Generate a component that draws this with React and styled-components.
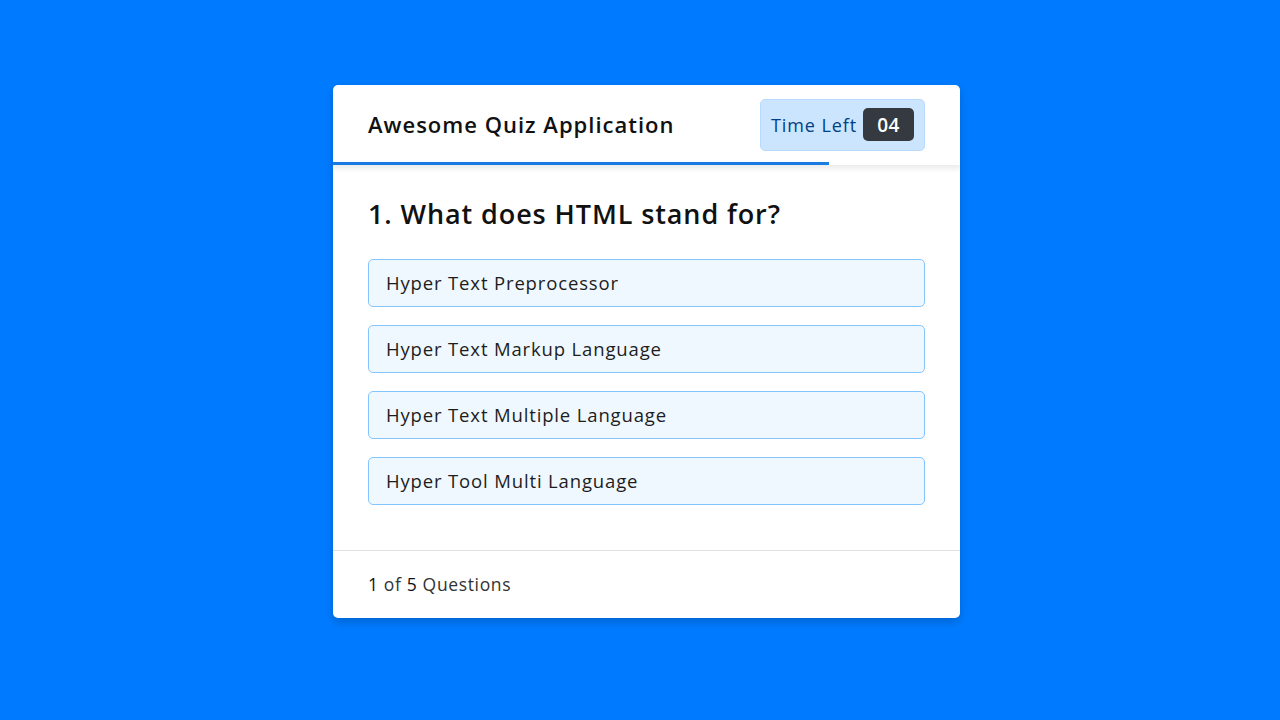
import styled, { createGlobalStyle } from 'styled-components';

const GlobalStyle = createGlobalStyle`
  * { box-sizing: border-box; margin: 0; padding: 0; }
  body {
    background: #007bff;
    font-family: "Open Sans", "Noto Sans", sans-serif;
  }
`

const options = [
  'Hyper Text Preprocessor',
  'Hyper Text Markup Language',
  'Hyper Text Multiple Language',
  'Hyper Tool Multi Language',
]

const App = () => {
  const progress = 496 / 627

  return (
    <>
      <GlobalStyle />
      <Page>
        <QuizBox>
          <Header>
            <HeaderRow>
              <Title>Awesome Quiz Application</Title>
              <Timer>
                <TimeText>Time Left</TimeText>
                <TimeSec>04</TimeSec>
              </Timer>
            </HeaderRow>
            <Track>
              <TimeLine style={{ width: `${progress * 100}%` }} />
            </Track>
          </Header>
          <Section>
            <Question>1. What does HTML stand for?</Question>
            <OptionList>
              {options.map(opt => (
                <Option key={opt}>{opt}</Option>
              ))}
            </OptionList>
          </Section>
          <Footer>
            <Count><b>1</b> of <b>5</b> Questions</Count>
          </Footer>
        </QuizBox>
      </Page>
    </>
  );
}

const Page = styled.div`
width: 1280px;
height: 720px;
display: flex;
justify-content: flex-start;
padding: 85px 0 0 333px;
`

const QuizBox = styled.div`
width: 627px;
height: 533px;
background: #fff;
border-radius: 5px;
box-shadow: 0 4px 10px rgba(0, 0, 0, 0.18);
display: flex;
flex-direction: column;
overflow: hidden;
`

const Header = styled.header`
position: relative;
z-index: 1;
display: flex;
flex-direction: column;
box-shadow: 0 3px 5px 1px rgba(0, 0, 0, 0.08);
`

const HeaderRow = styled.div`
height: 77px;
display: flex;
align-items: center;
justify-content: space-between;
padding: 2px 35px 0;
`

const Title = styled.div`
font-size: 22px;
letter-spacing: 1px;
font-weight: 600;
color: #111;
margin-top: -2px;
`

const Timer = styled.div`
width: 165px;
height: 52px;
display: flex;
align-items: center;
justify-content: space-between;
padding: 0 10px;
background: #cce5ff;
border: 1px solid #b8daff;
border-radius: 5px;
`

const TimeText = styled.span`
font-size: 18px;
letter-spacing: 0.9px;
color: #004085;
`

const TimeSec = styled.span`
width: 51px;
height: 33px;
display: flex;
align-items: center;
justify-content: center;
background: #343a40;
color: #fff;
font-size: 19px;
font-weight: 600;
letter-spacing: 0.5px;
border-radius: 5px;
`

const Track = styled.div`
height: 3px;
background: #fff;
`

const TimeLine = styled.div`
height: 3px;
background: #1a7be3;
`

const Section = styled.section`
flex: 1;
padding: 29px 35px 0;
`

const Question = styled.h2`
font-size: 27px;
letter-spacing: 0.9px;
line-height: 40px;
font-weight: 600;
color: #111;
`

const OptionList = styled.div`
margin-top: 25px;
display: flex;
flex-direction: column;
gap: 18px;
`

const Option = styled.div`
height: 48px;
display: flex;
align-items: center;
padding: 0 17px 1px;
background: #f0f8ff;
border: 1px solid #84c5fe;
border-radius: 5px;
font-size: 18.5px;
letter-spacing: 0.85px;
color: #1d1d1d;
`

const Footer = styled.footer`
height: 68px;
display: flex;
align-items: center;
padding: 0 35px 1px;
border-top: 1px solid #dfdfdf;
`

const Count = styled.span`
font-size: 17.5px;
letter-spacing: 0.65px;
color: #333;
b { font-weight: 500; color: #111; }
`

export default App;
